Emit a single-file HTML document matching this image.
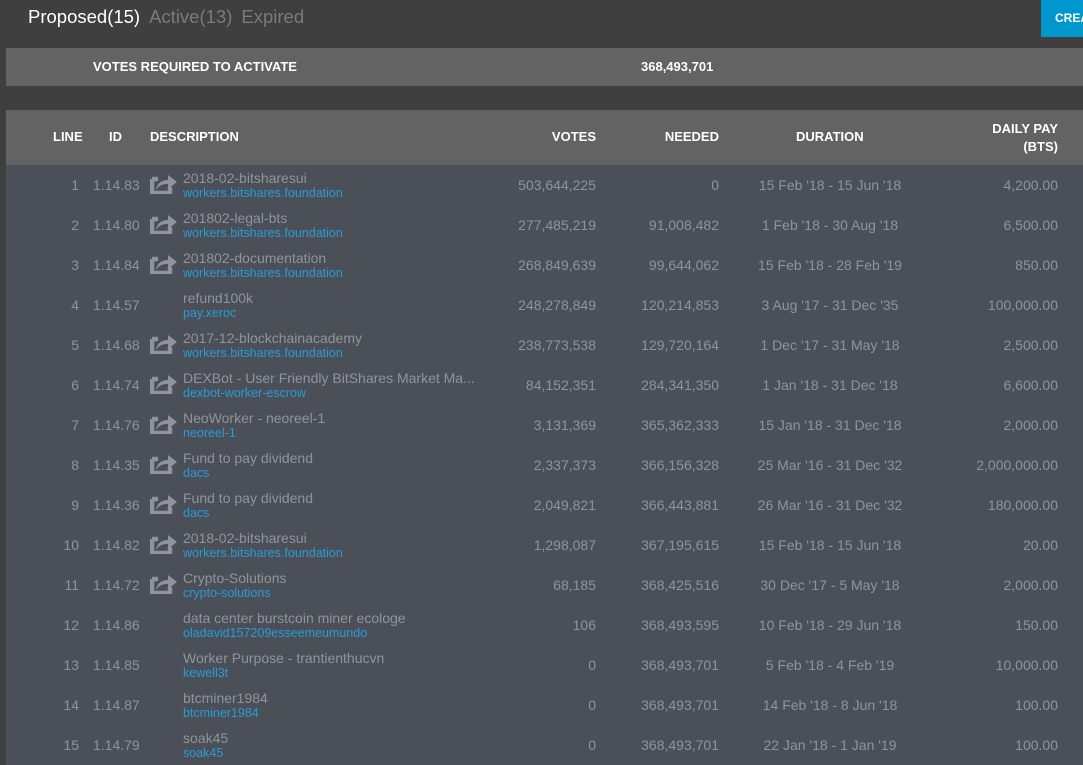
<!DOCTYPE html>
<html><head><style>
body{margin:0;background:#3f3f3f;font-family:"Liberation Sans",sans-serif;width:1083px;height:764px;overflow:hidden;position:relative}
.tabs{position:absolute;left:28px;top:6px;font-size:18.5px;color:#7a7a7a}
.tabs span{margin-right:9px}
.tabs .a{color:#fff}
.btn{position:absolute;left:1041px;top:0;width:50px;height:37px;background:#0097cf;color:#fff;font-size:12px;font-weight:bold;line-height:37px;padding-left:14px}
.req{position:absolute;left:6px;top:48px;width:1077px;height:38px;background:#636363;color:#fff;font-weight:bold;font-size:13px}
.hdr{position:absolute;left:6px;top:110px;width:1077px;height:55px;background:#636363;color:#fff;font-weight:bold;font-size:13px}
.body{position:absolute;left:6px;top:165px;width:1077px;height:600px;background:#4b5058}
.r{position:absolute;left:0;width:1077px;height:40px;font-size:14px;color:#8f949a}
.r div,.hdr div,.req div{position:absolute;white-space:nowrap}
.d1{color:#8f949a}
.d2{color:#2a9ad8;font-size:12.5px}
</style></head><body>
<div class="tabs"><span class="a">Proposed(15)</span><span>Active(13)</span><span>Expired</span></div>
<div class="btn">CREA</div>
<div class="req"><div style="left:87px;top:11px">VOTES REQUIRED TO ACTIVATE</div><div style="left:635px;top:11px">368,493,701</div></div>
<div class="hdr">
<div style="left:47px;top:19px">LINE</div>
<div style="left:103px;top:19px">ID</div>
<div style="left:144px;top:19px">DESCRIPTION</div>
<div style="right:487px;top:19px">VOTES</div>
<div style="right:364px;top:19px">NEEDED</div>
<div style="left:790px;top:19px">DURATION</div>
<div style="right:25px;top:11px">DAILY PAY</div>
<div style="right:25px;top:29px">(BTS)</div>
</div>
<div class="body" id="b"></div>
<script>
var d=[["1","1.14.83",1,"2018-02-bitsharesui","workers.bitshares.foundation","503,644,225","0","15 Feb '18 - 15 Jun '18","4,200.00"],
["2","1.14.80",1,"201802-legal-bts","workers.bitshares.foundation","277,485,219","91,008,482","1 Feb '18 - 30 Aug '18","6,500.00"],
["3","1.14.84",1,"201802-documentation","workers.bitshares.foundation","268,849,639","99,644,062","15 Feb '18 - 28 Feb '19","850.00"],
["4","1.14.57",0,"refund100k","pay.xeroc","248,278,849","120,214,853","3 Aug '17 - 31 Dec '35","100,000.00"],
["5","1.14.68",1,"2017-12-blockchainacademy","workers.bitshares.foundation","238,773,538","129,720,164","1 Dec '17 - 31 May '18","2,500.00"],
["6","1.14.74",1,"DEXBot - User Friendly BitShares Market Ma...","dexbot-worker-escrow","84,152,351","284,341,350","1 Jan '18 - 31 Dec '18","6,600.00"],
["7","1.14.76",1,"NeoWorker - neoreel-1","neoreel-1","3,131,369","365,362,333","15 Jan '18 - 31 Dec '18","2,000.00"],
["8","1.14.35",1,"Fund to pay dividend","dacs","2,337,373","366,156,328","25 Mar '16 - 31 Dec '32","2,000,000.00"],
["9","1.14.36",1,"Fund to pay dividend","dacs","2,049,821","366,443,881","26 Mar '16 - 31 Dec '32","180,000.00"],
["10","1.14.82",1,"2018-02-bitsharesui","workers.bitshares.foundation","1,298,087","367,195,615","15 Feb '18 - 15 Jun '18","20.00"],
["11","1.14.72",1,"Crypto-Solutions","crypto-solutions","68,185","368,425,516","30 Dec '17 - 5 May '18","2,000.00"],
["12","1.14.86",0,"data center burstcoin miner ecologe","oladavid157209esseemeumundo","106","368,493,595","10 Feb '18 - 29 Jun '18","150.00"],
["13","1.14.85",0,"Worker Purpose - trantienthucvn","kewell3t","0","368,493,701","5 Feb '18 - 4 Feb '19","10,000.00"],
["14","1.14.87",0,"btcminer1984","btcminer1984","0","368,493,701","14 Feb '18 - 8 Jun '18","100.00"],
["15","1.14.79",0,"soak45","soak45","0","368,493,701","22 Jan '18 - 1 Jan '19","100.00"]];
var ic='<svg width="28" height="20" viewBox="0 0 28 20" style="position:absolute;left:144px;top:9px"><path d="M2 5H8M2 5V19H20V13" stroke="#8f949a" stroke-width="4.5" fill="none"/><path d="M6 16C7 9 12 6 18 6V1L27 8L18 15V10C13 10 9 11 6 16Z" fill="#8f949a"/></svg>';
var h='';d.forEach(function(r,i){h+='<div class="r" style="top:'+(i*40)+'px"><div style="right:1004px;top:12px">'+r[0]+'</div><div style="left:87px;top:12px">'+r[1]+'</div>'+(r[2]?ic:'')+'<div class="d1" style="left:177px;top:5px">'+r[3]+'</div><div class="d2" style="left:177px;top:21px">'+r[4]+'</div><div style="right:487px;top:12px">'+r[5]+'</div><div style="right:364px;top:12px">'+r[6]+'</div><div style="left:824px;top:12px;transform:translateX(-50%)">'+r[7]+'</div><div style="right:25px;top:12px">'+r[8]+'</div></div>';});
document.getElementById('b').innerHTML=h;
</script>
</body></html>
